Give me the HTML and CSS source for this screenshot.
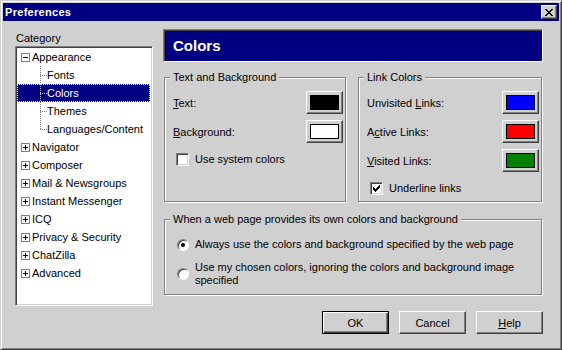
FILE: index.html
```html
<!DOCTYPE html>
<html lang="en">
<head>
    <meta charset="UTF-8">
    <title>Preferences</title>
    <link rel="stylesheet" href="styles.css">
</head>
<body>
    <div class="window">
        <div class="titlebar">
            <span class="title">Preferences</span>
            <button class="close-button">
                <svg width="8" height="7" viewBox="0 0 8 7" shape-rendering="crispEdges">
                    <path d="M0 0h2v1h-2zM6 0h2v1h-2zM1 1h2v1h-2zM5 1h2v1h-2zM2 2h4v1h-4zM3 3h2v1h-2zM2 4h4v1h-4zM1 5h2v1h-2zM5 5h2v1h-2zM0 6h2v1h-2zM6 6h2v1h-2z" fill="#000"/>
                </svg>
            </button>
        </div>

        <div class="content">
            <div class="main">
                <div class="sidebar">
                    <div class="cat-label">Category</div>
                    <div class="tree">
                        <div class="tree-row">
                            <span class="expander"><svg width="9" height="9" shape-rendering="crispEdges"><rect x="0.5" y="0.5" width="8" height="8" fill="#fff" stroke="#808080"/><path d="M2 4h5v1h-5z" fill="#000"/></svg></span>Appearance
                        </div>
                        <div class="tree-row child"><span class="conn"></span>Fonts</div>
                        <div class="tree-row child selected"><span class="conn"></span>Colors</div>
                        <div class="tree-row child"><span class="conn"></span>Themes</div>
                        <div class="tree-row child"><span class="conn last"></span>Languages/Content</div>
                        <div class="tree-row"><span class="expander plus"></span>Navigator</div>
                        <div class="tree-row"><span class="expander plus"></span>Composer</div>
                        <div class="tree-row"><span class="expander plus"></span>Mail &amp; Newsgroups</div>
                        <div class="tree-row"><span class="expander plus"></span>Instant Messenger</div>
                        <div class="tree-row"><span class="expander plus"></span>ICQ</div>
                        <div class="tree-row"><span class="expander plus"></span>Privacy &amp; Security</div>
                        <div class="tree-row"><span class="expander plus"></span>ChatZilla</div>
                        <div class="tree-row"><span class="expander plus"></span>Advanced</div>
                    </div>
                </div>

                <div class="panel">
                    <div class="panel-header">Colors</div>

                    <div class="group-row">
                        <fieldset class="group text-group">
                            <legend>Text and Background</legend>
                            <div class="color-row">
                                <span><u>T</u>ext:</span>
                                <button class="color-button"><span class="swatch swatch-black"></span></button>
                            </div>
                            <div class="color-row">
                                <span><u>B</u>ackground:</span>
                                <button class="color-button"><span class="swatch swatch-white"></span></button>
                            </div>
                            <label class="check-row"><span class="checkbox"></span>Use system colors</label>
                        </fieldset>

                        <fieldset class="group link-group">
                            <legend>Link Colors</legend>
                            <div class="color-row">
                                <span>Unvisited <u>L</u>inks:</span>
                                <button class="color-button"><span class="swatch swatch-blue"></span></button>
                            </div>
                            <div class="color-row">
                                <span>A<u>c</u>tive Links:</span>
                                <button class="color-button"><span class="swatch swatch-red"></span></button>
                            </div>
                            <div class="color-row">
                                <span><u>V</u>isited Links:</span>
                                <button class="color-button"><span class="swatch swatch-green"></span></button>
                            </div>
                            <label class="check-row">
                                <span class="checkbox checked">
                                    <svg width="7" height="7" viewBox="0 0 7 7" shape-rendering="crispEdges">
                                        <path d="M6 0h1v3h-1zM5 1h1v3h-1zM4 2h1v3h-1zM0 2h1v3h-1zM1 3h1v3h-1zM2 4h1v3h-1zM3 3h1v3h-1z" fill="#000"/>
                                    </svg>
                                </span>Underline links
                            </label>
                        </fieldset>
                    </div>

                    <fieldset class="group page-group">
                        <legend>When a web page provides its own colors and background</legend>
                        <label class="radio-row"><span class="radio checked"></span><span>Always use the colors and background specified by the web page</span></label>
                        <label class="radio-row"><span class="radio"></span><span>Use my chosen colors, ignoring the colors and background image<br>specified</span></label>
                    </fieldset>
                </div>
            </div>

            <div class="buttons">
                <button class="push-button default">OK</button>
                <button class="push-button">Cancel</button>
                <button class="push-button"><u>H</u>elp</button>
            </div>
        </div>
    </div>
</body>
</html>
```

FILE: styles.css
```css
body {
    margin: 0;
    font-family: "Liberation Sans", Arial, sans-serif;
    font-size: 11px;
    color: #000;
    background: #d0d0d0;
}

button {
    font: inherit;
    color: #000;
}

u {
    text-decoration: underline;
    text-underline-offset: 1px;
}

.window {
    width: 562px;
    height: 350px;
    box-sizing: border-box;
    background: #d0d0d0;
    border: 1px solid;
    border-color: #d0d0d0 #404040 #404040 #d0d0d0;
    box-shadow: inset 1px 1px 0 #fff, inset -1px -1px 0 #808080;
    padding: 2px;
    display: flex;
    flex-direction: column;
}

/* Title bar */
.titlebar {
    height: 18px;
    background: #000080;
    color: #fff;
    font-weight: bold;
    display: flex;
    align-items: center;
    justify-content: space-between;
    padding: 0 2px;
}

.title {
    letter-spacing: 0.3px;
}

.close-button {
    width: 16px;
    height: 14px;
    box-sizing: border-box;
    padding: 0;
    background: #d0d0d0;
    border: 1px solid;
    border-color: #fff #404040 #404040 #fff;
    box-shadow: inset -1px -1px 0 #808080;
    display: flex;
    align-items: center;
    justify-content: center;
}

.content {
    flex: 1;
    display: flex;
    flex-direction: column;
    padding: 7px 16px 0 12px;
}

.main {
    display: flex;
    gap: 10px;
}

/* Category tree */
.sidebar {
    width: 138px;
}

.cat-label {
    line-height: 13px;
    padding: 4px 0 1px 1px;
}

.tree {
    height: 260px;
    box-sizing: border-box;
    background: #fff;
    border: 1px solid;
    border-color: #808080 #fff #fff #808080;
    box-shadow: inset 1px 1px 0 #404040, inset -1px -1px 0 #d0d0d0;
    padding: 1px 2px 1px 1px;
}

.tree-row {
    height: 18px;
    display: flex;
    align-items: center;
    white-space: nowrap;
}

.expander {
    width: 9px;
    height: 9px;
    margin: 0 2px 0 4px;
    display: flex;
}

.expander.plus {
    box-sizing: border-box;
    border: 1px solid #808080;
    background:
        linear-gradient(#000, #000) center / 5px 1px no-repeat,
        linear-gradient(#000, #000) center / 1px 5px no-repeat,
        #fff;
}

.conn {
    width: 7px;
    height: 18px;
    margin-left: 23px;
    background:
        repeating-linear-gradient(to bottom, #808080 0 1px, transparent 1px 2px) 0 0 / 1px 100% no-repeat,
        repeating-linear-gradient(to right, #808080 0 1px, transparent 1px 2px) 0 9px / 100% 1px no-repeat;
}

.conn.last {
    background:
        repeating-linear-gradient(to bottom, #808080 0 1px, transparent 1px 2px) 0 0 / 1px 10px no-repeat,
        repeating-linear-gradient(to right, #808080 0 1px, transparent 1px 2px) 0 9px / 100% 1px no-repeat;
}

.tree-row.selected {
    background: #000080;
    color: #fff;
    outline: 1px dotted #fff;
    outline-offset: -1px;
}

.tree-row.selected .conn {
    background:
        repeating-linear-gradient(to bottom, #c0c0c0 0 1px, transparent 1px 2px) 0 0 / 1px 100% no-repeat,
        repeating-linear-gradient(to right, #c0c0c0 0 1px, transparent 1px 2px) 0 9px / 100% 1px no-repeat;
}

/* Right panel */
.panel {
    width: 380px;
}

.panel-header {
    margin-top: 1px;
    height: 33px;
    box-sizing: border-box;
    background: #000080;
    color: #fff;
    font-size: 15px;
    font-weight: bold;
    border: 1px solid;
    border-color: #808080 #fff #fff #808080;
    box-shadow: inset 1px 1px 0 #404040;
    display: flex;
    align-items: center;
    padding-left: 9px;
}

.group-row {
    display: flex;
    gap: 12px;
    margin: 9px 1px 0;
}

.group {
    margin: 0;
    min-width: 0;
    border: 1px solid #808080;
    box-shadow: inset 1px 1px 0 #fff, 1px 1px 0 #fff;
    padding: 7px 2px 6px 8px;
}

.group legend {
    background: #d0d0d0;
    padding: 0 3px;
    margin-left: -3px;
    line-height: 13px;
}

.text-group {
    width: 182px;
    box-sizing: border-box;
}

.link-group {
    width: 184px;
    box-sizing: border-box;
}

.color-row {
    display: flex;
    justify-content: space-between;
    align-items: center;
    height: 23px;
    margin-bottom: 6px;
}

.color-button {
    width: 37px;
    height: 23px;
    box-sizing: border-box;
    padding: 3px;
    background: #d0d0d0;
    border: 1px solid;
    border-color: #fff #404040 #404040 #fff;
    box-shadow: inset -1px -1px 0 #808080;
    display: flex;
}

.swatch {
    flex: 1;
    border: 1px solid #000;
}

.swatch-black { background: #000; }
.swatch-white { background: #fff; }
.swatch-blue { background: #0000ff; }
.swatch-red { background: #ff0000; }
.swatch-green { background: #008000; }

.check-row {
    display: flex;
    align-items: center;
    margin: 10px 0 0 3px;
    line-height: 13px;
}

.checkbox {
    width: 13px;
    height: 13px;
    box-sizing: border-box;
    margin-right: 6px;
    background: #fff;
    border: 1px solid;
    border-color: #808080 #fff #fff #808080;
    box-shadow: inset 1px 1px 0 #404040, inset -1px -1px 0 #d0d0d0;
    display: flex;
    align-items: center;
    justify-content: center;
}

.page-group {
    margin: 11px 1px 0;
    padding: 12px 2px 7px 8px;
}

.radio-row {
    display: flex;
    align-items: center;
    line-height: 13px;
    margin-left: 4px;
}

.radio-row + .radio-row {
    margin-top: 10px;
}

.radio {
    width: 12px;
    height: 12px;
    flex-shrink: 0;
    box-sizing: border-box;
    margin-right: 6px;
    border-radius: 50%;
    background: #fff;
    border: 1px solid;
    border-color: #808080 #fff #fff #808080;
    box-shadow: inset 1px 1px 0 #404040;
    display: flex;
    align-items: center;
    justify-content: center;
}

.radio.checked::after {
    content: '';
    width: 4px;
    height: 4px;
    border-radius: 50%;
    background: #000;
}

/* Dialog buttons */
.buttons {
    display: flex;
    justify-content: flex-end;
    gap: 10px;
    margin-top: 5px;
}

.push-button {
    width: 67px;
    height: 23px;
    box-sizing: border-box;
    padding: 0;
    background: #d0d0d0;
    border: 1px solid;
    border-color: #fff #404040 #404040 #fff;
    box-shadow: inset -1px -1px 0 #808080;
}

.push-button.default {
    border: 1px solid #000;
    box-shadow: inset 1px 1px 0 #fff, inset -1px -1px 0 #404040, inset -2px -2px 0 #808080;
}
```
